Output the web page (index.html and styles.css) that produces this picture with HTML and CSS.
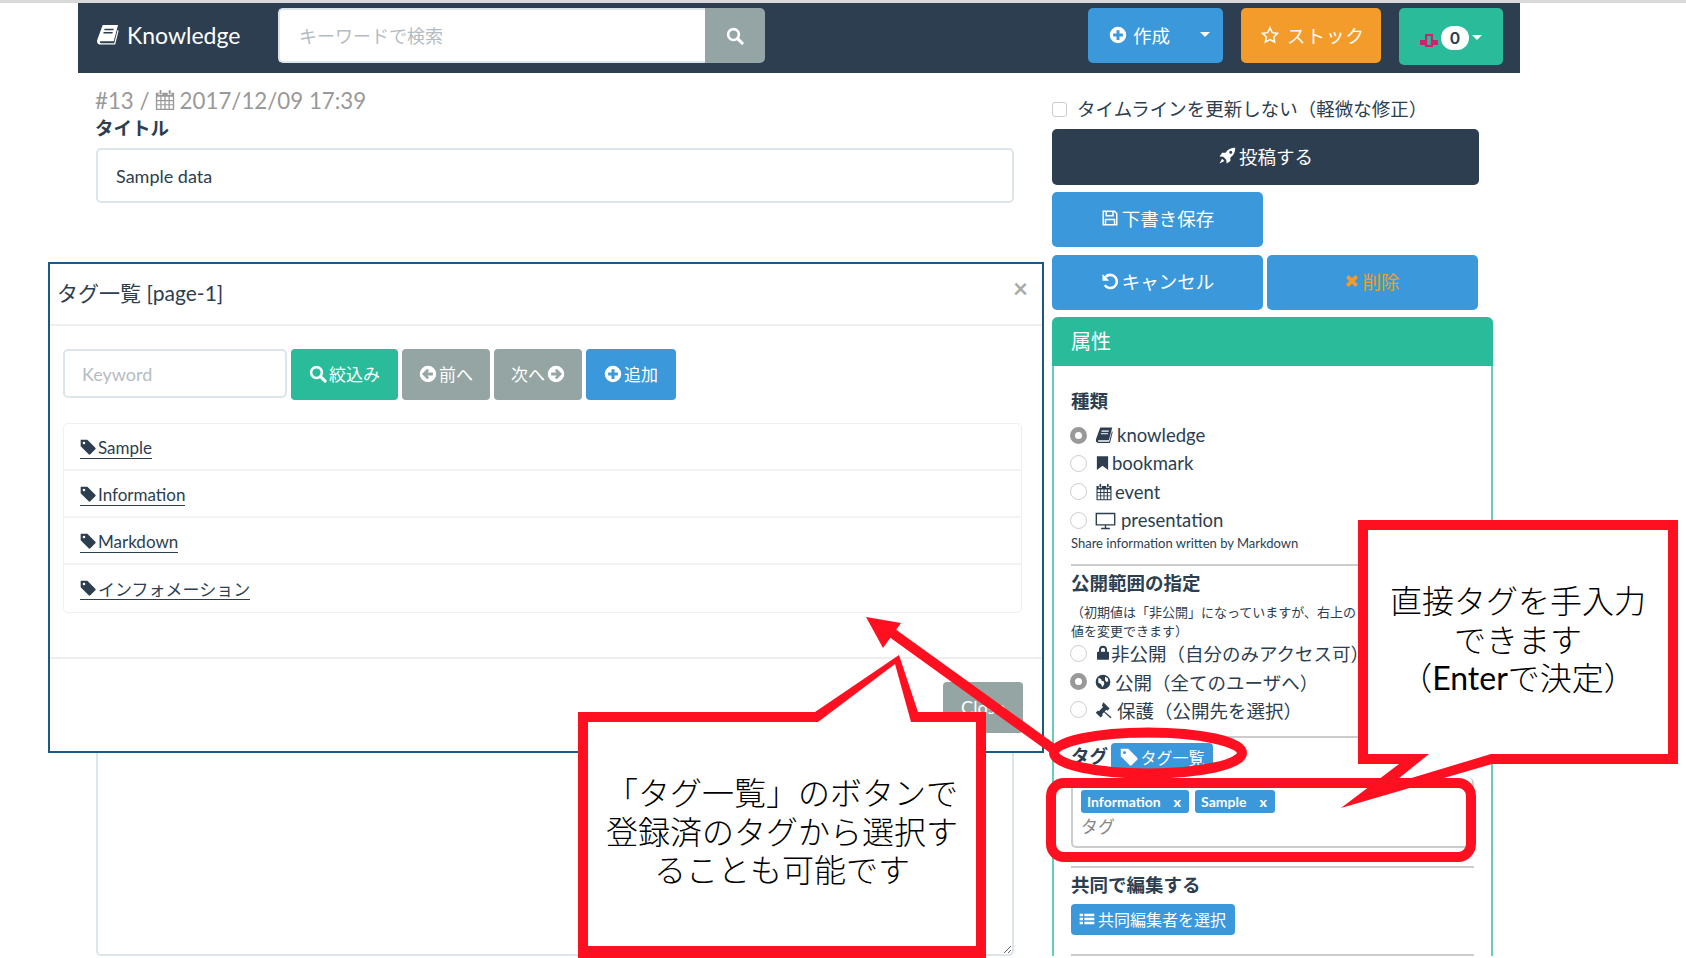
FILE: index.html
```html
<!doctype html>
<html>

<head>
	<meta charset="utf-8" />
	<link rel="stylesheet" href="styles.css">
</head>

<body>

	<svg class="icon-defs" width="0" height="0">
		<symbol id="i-book" viewBox="0 0 24 24"><path fill-rule="evenodd" d="M7 2h16l-4.500 17H5c-1.400 0-1.400 2 0 2h14l3.600-14 1 1L20 22.500H4.500C1.500 22.500 .5 20 1.500 17zM9 6l-.4 1.500h9.500L18.500 6zM8 9.500l-.4 1.500h9.500l.4-1.500z"/></symbol>
		<symbol id="i-search" viewBox="0 0 24 24"><circle cx="10" cy="10" r="7.200" fill="none" stroke="currentColor" stroke-width="3.400"/><path d="M15.500 15.500l6 6" stroke="currentColor" stroke-width="4" stroke-linecap="round"/></symbol>
		<symbol id="i-plus" viewBox="0 0 24 24"><path fill-rule="evenodd" d="M12 1a11 11 0 1 0 0 22a11 11 0 1 0 0-22zM10 5.500h4V10h4.500v4H14v4.500h-4V14H5.500v-4H10z"/></symbol>
		<symbol id="i-star" viewBox="0 0 24 24"><path fill="none" stroke="currentColor" stroke-width="2" d="M12 2.500l3 6.400 7 .9-5.100 4.800 1.300 6.900-6.200-3.400-6.200 3.400 1.300-6.900L2 9.800l7-.9z"/></symbol>
		<symbol id="i-cal" viewBox="0 0 24 24"><path fill-rule="evenodd" d="M2 4h3v2.500h4V4h6v2.500h4V4h3v19H2zM3.500 8.500V12h3.400V8.500zm4.700 0V12h3.100V8.500zm4.500 0V12h3.100V8.500zm4.500 0V12h3.300V8.500zM3.500 13.300v3.200h3.400v-3.200zm4.700 0v3.200h3.100v-3.200zm4.500 0v3.200h3.100v-3.200zm4.500 0v3.200h3.300v-3.200zM3.500 17.800v3.700h3.400v-3.700zm4.700 0v3.700h3.100v-3.700zm4.500 0v3.700h3.100v-3.700zm4.500 0v3.700h3.300v-3.700z"/><rect x="6" y="1" width="2.200" height="5" rx="1"/><rect x="16" y="1" width="2.200" height="5" rx="1"/></symbol>
		<symbol id="i-rocket" viewBox="0 0 24 24"><path fill-rule="evenodd" d="M23 1c-6 0-10 2-13 6.500H5.500L2 12.500l5 .5 4 4 .5 5 5-3.500v-4.500C21 11 23 7 23 1zM17 5a2 2 0 1 0 0 4a2 2 0 1 0 0-4zM5.500 15.500L2 22l6.500-3.500z"/></symbol>
		<symbol id="i-save" viewBox="0 0 24 24"><path fill="none" stroke="currentColor" stroke-width="2" d="M3 3h15l3 3v15H3zM7 3v6h9V3M6 21v-7h12v7"/></symbol>
		<symbol id="i-undo" viewBox="0 0 24 24"><path fill="none" stroke="currentColor" stroke-width="3.400" d="M6 6.500a8.800 8.800 0 1 1-1 11"/><path d="M2 2.500v9h9z"/></symbol>
		<symbol id="i-times" viewBox="0 0 24 24"><path stroke="currentColor" stroke-width="6.500" d="M4 4l16 16M20 4L4 20"/></symbol>
		<symbol id="i-tag" viewBox="0 0 24 24"><path fill-rule="evenodd" d="M1 1h10l12 12a2 2 0 0 1 0 2.500L15.500 23a2 2 0 0 1-2.500 0L1 11zM6 4a2 2 0 1 0 0 4a2 2 0 1 0 0-4z"/></symbol>
		<symbol id="i-left" viewBox="0 0 24 24"><path fill-rule="evenodd" d="M12 1a11 11 0 1 0 0 22a11 11 0 1 0 0-22zM11 5l2.500 2.500L11 10h7.500v4H11l2.500 2.500L11 19l-7-7z"/></symbol>
		<symbol id="i-right" viewBox="0 0 24 24"><path fill-rule="evenodd" d="M12 1a11 11 0 1 0 0 22a11 11 0 1 0 0-22zM13 5l-2.500 2.500L13 10H5.500v4H13l-2.500 2.500L13 19l7-7z"/></symbol>
		<symbol id="i-mark" viewBox="0 0 24 24"><path d="M3 1h18v22l-9-6.500L3 23z"/></symbol>
		<symbol id="i-desk" viewBox="0 0 24 24"><path fill="none" stroke="currentColor" stroke-width="1.600" d="M1.500 4h21v13h-21zM12 17v4M7 21.200h10"/></symbol>
		<symbol id="i-lock" viewBox="0 0 24 24"><path d="M4 10h16a1 1 0 0 1 1 1v10a1 1 0 0 1-1 1H4a1 1 0 0 1-1-1V11a1 1 0 0 1 1-1z"/><path fill="none" stroke="currentColor" stroke-width="3" d="M7.500 11V7a4.500 4.500 0 0 1 9 0v4"/></symbol>
		<symbol id="i-globe" viewBox="0 0 24 24"><path fill-rule="evenodd" d="M12 1a11 11 0 1 0 0 22a11 11 0 1 0 0-22zM5 6l4 1 1 3 3 1 1 4-3 5-2-5-4-2zM15 4l4 2 1 5-3 1-2-3z"/></symbol>
		<symbol id="i-gavel" viewBox="0 0 24 24"><path d="M11 1.500l8.500 8.500-3 3-1.500-1.200L13 14l9 7.500-1.500 1.500L12 15l-2.500 2.500 1 1.500-3 3L1 15.500l3-3 1.200 1.300 5.800-6.300L9 6.500z"/></symbol>
		<symbol id="i-list" viewBox="0 0 24 24"><path d="M1 4h5v4H1zM8 4h15v4H8zM1 10h5v4H1zM8 10h15v4H8zM1 16h5v4H1zM8 16h15v4H8z"/></symbol>
	</svg>

	<div class="topline"></div>

	<nav class="navbar">
		<a class="brand"><svg class="ico ico-brand"><use href="#i-book"/></svg>Knowledge</a>
		<div class="search">
			<input class="search-input" placeholder="キーワードで検索">
			<span class="search-btn"><svg class="ico"><use href="#i-search"/></svg></span>
		</div>
		<div class="nav-actions">
			<a class="nav-btn nav-create"><svg class="ico"><use href="#i-plus"/></svg>作成<i class="caret caret-create"></i></a>
			<a class="nav-btn nav-stock"><svg class="ico"><use href="#i-star"/></svg>ストック</a>
			<a class="nav-btn nav-user">
				<svg class="pink" viewBox="0 0 18 15"><path fill-rule="evenodd" d="M5 1h8v6h5v5h-5v2H5v-2H0V7h5zM7.200 3v9h3.600V3z"/></svg>
				<span class="badge">0</span><i class="caret"></i>
			</a>
		</div>
	</nav>

	<main class="page">
		<section class="editor">
			<div class="meta">#13 / <svg class="ico ico-meta"><use href="#i-cal"/></svg> 2017/12/09 17:39</div>
			<label class="title-label">タイトル</label>
			<input class="title-input" value="Sample data">
			<textarea class="body-input"></textarea>
		</section>

		<aside class="side">
			<label class="check-row"><input type="checkbox" class="check">タイムラインを更新しない（軽微な修正）</label>
			<a class="btn btn-post"><svg class="ico"><use href="#i-rocket"/></svg>投稿する</a>
			<div class="btn-row">
				<a class="btn btn-blue"><svg class="ico"><use href="#i-save"/></svg>下書き保存</a>
			</div>
			<div class="btn-row">
				<a class="btn btn-blue"><svg class="ico"><use href="#i-undo"/></svg>キャンセル</a>
				<a class="btn btn-blue btn-danger"><svg class="ico"><use href="#i-times"/></svg>削除</a>
			</div>

			<div class="panel">
				<div class="panel-head">属性</div>
				<div class="panel-body">
					<h5 class="kind-title">種類</h5>
					<label class="radio-row"><input type="radio" name="kind" checked><svg class="ico"><use href="#i-book"/></svg>knowledge</label>
					<label class="radio-row"><input type="radio" name="kind"><svg class="ico ico-mark"><use href="#i-mark"/></svg>bookmark</label>
					<label class="radio-row"><input type="radio" name="kind"><svg class="ico ico-cal"><use href="#i-cal"/></svg>event</label>
					<label class="radio-row"><input type="radio" name="kind"><svg class="ico ico-wide"><use href="#i-desk"/></svg>presentation</label>
					<p class="help">Share information written by Markdown</p>
					<hr class="rule rule-first">

					<h5 class="scope-title">公開範囲の指定</h5>
					<p class="note">（初期値は「非公開」になっていますが、右上の<br>値を変更できます）</p>
					<label class="radio-row"><input type="radio" name="scope"><svg class="ico ico-lock"><use href="#i-lock"/></svg>非公開（自分のみアクセス可）</label>
					<label class="radio-row"><input type="radio" name="scope" checked><svg class="ico ico-globe"><use href="#i-globe"/></svg>公開（全てのユーザへ）</label>
					<label class="radio-row"><input type="radio" name="scope"><svg class="ico"><use href="#i-gavel"/></svg>保護（公開先を選択）</label>
					<hr class="rule rule-tags">

					<div class="tag-head">
						<h5>タグ</h5>
						<a class="tag-list-btn"><svg class="ico"><use href="#i-tag"/></svg>タグ一覧</a>
					</div>
					<div class="tag-input">
						<div class="chips">
							<span class="chip">Information<b>x</b></span>
							<span class="chip">Sample<b>x</b></span>
						</div>
						<span class="tag-placeholder">タグ</span>
					</div>
					<hr class="rule rule-edit">

					<h5 class="edit-title">共同で編集する</h5>
					<a class="editor-btn"><svg class="ico"><use href="#i-list"/></svg>共同編集者を選択</a>
					<hr class="rule rule-last">
				</div>
			</div>
		</aside>
	</main>

	<div class="modal">
		<div class="modal-head">
			<span>タグ一覧 [page-1]</span>
			<span class="modal-x">×</span>
		</div>
		<div class="modal-body">
			<div class="filter">
				<input class="keyword" placeholder="Keyword">
				<a class="mbtn mbtn-green"><svg class="ico"><use href="#i-search"/></svg>絞込み</a>
				<a class="mbtn mbtn-gray mbtn-prev"><svg class="ico"><use href="#i-left"/></svg>前へ</a>
				<a class="mbtn mbtn-gray mbtn-next">次へ<svg class="ico"><use href="#i-right"/></svg></a>
				<a class="mbtn mbtn-blue"><svg class="ico"><use href="#i-plus"/></svg>追加</a>
			</div>
			<ul class="tag-list">
				<li><a><svg class="ico"><use href="#i-tag"/></svg>Sample</a></li>
				<li><a><svg class="ico"><use href="#i-tag"/></svg>Information</a></li>
				<li><a><svg class="ico"><use href="#i-tag"/></svg>Markdown</a></li>
				<li><a><svg class="ico"><use href="#i-tag"/></svg>インフォメーション</a></li>
			</ul>
		</div>
		<div class="modal-foot"><a class="close-btn">Close</a></div>
	</div>

	<!-- red annotations drawn over the screenshot -->
	<svg class="marks" viewBox="0 0 1686 958">
		<polygon class="red" points="578,712 815,712 899,655 918,712 986,712 986,958 578,958"/>
		<polygon class="white" points="588,722 818,722 895,664 911,722 976,722 976,946 588,946"/>

		<path class="red-line" d="M1056 751L888 630"/>
		<polygon class="red" points="866,617 901,623 883,648"/>

		<ellipse class="red-ring" cx="1148" cy="753" rx="94" ry="20.500"/>
		<rect class="red-ring" x="1051" y="783" width="420" height="74" rx="13"/>

		<polygon class="red" points="1358,520 1678,520 1678,764 1492,764 1341,808 1399,764 1358,764"/>
		<polygon class="white" points="1368,530 1668,530 1668,754 1491,754 1408,779 1398,779 1429,754 1368,754"/>
		<path class="red-line" d="M1380 783h60"/>
	</svg>

	<div class="callout callout-left">「タグ一覧」のボタンで<br>登録済のタグから選択す<br>ることも可能です</div>
	<div class="callout callout-right">直接タグを手入力<br>できます<br>（<span class="latin">Enter</span>で決定）</div>

</body>

</html>
```

FILE: styles.css
```css
* {
	box-sizing: border-box;
}

html,
body {
	height: 100vh;
	margin: 0;
	overflow: hidden;
}

body {
	position: relative;
	background: #fff;
	color: #2c3e50;
	font-family: Lato, "Noto Sans CJK JP", sans-serif;
	font-size: 18.500px;
}

input,
textarea {
	font-family: inherit;
	outline: none;
}

.icon-defs {
	position: absolute;
}

.ico {
	width: 18px;
	height: 18px;
	flex: none;
	fill: currentColor;
}

.topline {
	height: 3px;
	background: #d9d9d9;
}

/* navbar */
.navbar {
	display: flex;
	align-items: flex-start;
	width: 1442px;
	height: 70px;
	margin-left: 78px;
	padding: 5px 17px 0 18px;
	background: #2c3e50;
	color: #fff;
}

.brand {
	display: flex;
	align-items: center;
	gap: 8px;
	width: 182px;
	height: 53px;
	font-size: 23px;
}

.ico-brand {
	width: 23px;
	height: 23px;
}

.search {
	display: flex;
	width: 487px;
	height: 55px;
}

.search-input {
	flex: 1;
	min-width: 0;
	padding: 0 19px;
	border: 2px solid #dce4ec;
	border-right: 0;
	border-radius: 5px 0 0 5px;
	font-size: 18px;
}

.search-input::placeholder,
.keyword::placeholder {
	color: #b4bcc2;
}

.search-btn {
	display: flex;
	align-items: center;
	justify-content: center;
	width: 60px;
	border-radius: 0 5px 5px 0;
	background: #95a5a6;
}

.nav-actions {
	display: flex;
	gap: 18px;
	margin-left: auto;
}

.nav-btn {
	display: flex;
	align-items: center;
	height: 55px;
	padding-bottom: 2px;
	border-radius: 5px;
}

.nav-create {
	width: 135px;
	padding-left: 21px;
	gap: 6px;
	background: #3a98db;
}

.nav-stock {
	width: 140px;
	padding-left: 20px;
	gap: 8px;
	background: #f39c2c;
	letter-spacing: 1px;
}

.nav-user {
	width: 104px;
	height: 57px;
	padding: 2px 0 0 21px;
	background: #2abb9b;
}

.caret {
	width: 0;
	height: 0;
	margin-left: 3px;
	border: 5px solid transparent;
	border-top-color: #fff;
	border-bottom: 0;
}

.caret-create {
	margin-left: 24px;
}

.pink {
	width: 18px;
	height: 15px;
	margin-top: 6px;
	fill: #c9256e;
}

.badge {
	width: 28px;
	height: 24px;
	margin-left: 3px;
	border-radius: 12px;
	background: #fff;
	color: #2c3e50;
	font-size: 17px;
	font-weight: 700;
	line-height: 24px;
	text-align: center;
}

/* page columns */
.page {
	display: flex;
	gap: 38px;
	padding-left: 95px;
}

.editor {
	display: flex;
	flex-direction: column;
	width: 919px;
}

.meta {
	display: flex;
	align-items: center;
	gap: 4px;
	height: 30px;
	margin-top: 12px;
	color: #999;
	font-size: 22.300px;
}

.ico-meta {
	width: 22px;
	height: 24px;
}

.title-label {
	height: 26px;
	font-weight: 700;
	line-height: 26px;
}

.title-input {
	height: 55px;
	margin: 7px 0 0 1px;
	padding: 0 18px;
	border: 2px solid #dce4ec;
	border-radius: 5px;
	color: #2c3e50;
	font-size: 18px;
}

.body-input {
	height: 686px;
	margin: 67px 0 0 1px;
	border: 2px solid #dce4ec;
	border-radius: 5px;
}

/* right column */
.side {
	width: 441px;
}

.check-row {
	display: flex;
	align-items: center;
	height: 22px;
	margin-top: 25px;
	padding-bottom: 2px;
	white-space: nowrap;
}

.check {
	width: 15px;
	height: 15px;
	margin: 2px 10px 0 0;
	appearance: none;
	border: 1px solid #ccc;
	border-radius: 3px;
}

.btn {
	display: flex;
	align-items: center;
	justify-content: center;
	gap: 3px;
	height: 55px;
	padding-bottom: 3px;
	border-radius: 5px;
	color: #fff;
}

.btn-post {
	width: 427px;
	height: 56px;
	margin: 9px 0 7px;
	background: #2c3e50;
}

.btn-row {
	display: flex;
	gap: 4px;
	margin-bottom: 8px;
}

.btn-blue {
	width: 211px;
	background: #3a98db;
}

.btn-danger {
	color: #f39c2c;
}

.btn-danger .ico {
	width: 14px;
	height: 14px;
}

.panel {
	width: 441px;
	margin-top: -1px;
	border: 2px solid #66cdb7;
	border-top: 0;
	border-bottom: 0;
	border-radius: 6px 6px 0 0;
}

.panel-head {
	height: 49px;
	margin: 0 -2px;
	padding-left: 19px;
	border-radius: 6px 6px 0 0;
	background: #2abb9b;
	color: #fff;
	font-size: 20px;
	line-height: 49px;
}

.panel-body {
	padding: 23px 17px 0;
}

h5 {
	height: 24px;
	margin: 0;
	font-size: 18.500px;
	font-weight: 700;
	line-height: 24px;
}

.radio-row {
	display: flex;
	align-items: center;
	height: 28.300px;
	gap: 4px;
	white-space: nowrap;
}

.radio-row input {
	width: 17px;
	height: 17px;
	margin: 0 4px 0 -1px;
	appearance: none;
	border: 1px solid #ccc;
	border-radius: 50%;
}

.radio-row input:checked {
	border: 5px solid #999;
	background: #fff;
}

.kind-title {
	margin-bottom: 8px;
}

.ico-mark {
	width: 15px;
	margin-right: -2px;
}

.ico-cal {
	margin-right: -2px;
}

.ico-wide {
	width: 21px;
	height: 21px;
	margin-right: 1px;
}

.ico-lock {
	width: 16px;
	height: 16px;
	margin-right: -4px;
}

.ico-globe {
	width: 16px;
	height: 16px;
}

.help {
	height: 16px;
	margin: 1px 0 0;
	font-size: 13px;
	line-height: 16px;
	white-space: nowrap;
}

.rule {
	height: 2px;
	margin: 0;
	border: 0;
	background: #ccc;
}

.rule-first {
	margin-top: 13px;
}

.scope-title {
	margin-top: 5px;
}

.note {
	height: 36px;
	margin: 8px 0 0;
	font-size: 13px;
	line-height: 19px;
	white-space: nowrap;
}

.rule-tags {
	margin-top: 12px;
}

.tag-head {
	display: flex;
	height: 28px;
	margin-top: 5px;
	gap: 3px;
}

.tag-head h5 {
	margin-top: 1px;
}

.tag-list-btn {
	display: flex;
	align-items: center;
	justify-content: center;
	width: 102px;
	gap: 3px;
	border-radius: 4px 4px 0 0;
	background: #3a98db;
	color: #fff;
	font-size: 16px;
}

.tag-input {
	display: flex;
	flex-direction: column;
	height: 70px;
	margin-top: 7px;
	padding: 12px 0 0 8px;
	border: 2px solid #ccc;
	border-top: 0;
	border-radius: 5px;
}

.chips {
	display: flex;
	gap: 6px;
}

.chip {
	display: flex;
	justify-content: space-between;
	height: 23px;
	padding: 0 8px 0 6px;
	border-radius: 3px;
	background: #3a98db;
	color: #fff;
	font-size: 14px;
	font-weight: 700;
	line-height: 23px;
}

.chip b {
	margin-left: 13px;
}

.tag-placeholder {
	margin-top: 2px;
	color: #888;
	font-size: 17px;
	line-height: 24px;
}

.rule-edit {
	margin-top: 18px;
}

.edit-title {
	margin-top: 5px;
}

.editor-btn {
	display: flex;
	align-items: center;
	width: 164px;
	height: 31px;
	margin-top: 7px;
	padding: 0 0 2px 8px;
	gap: 3px;
	border-radius: 4px;
	background: #3a98db;
	color: #fff;
	font-size: 16px;
	white-space: nowrap;
}

.editor-btn .ico {
	width: 16px;
	height: 16px;
}

.rule-last {
	margin-top: 19px;
}

/* tag list dialog */
.modal {
	display: flex;
	flex-direction: column;
	position: absolute;
	top: 262px;
	left: 48px;
	width: 996px;
	height: 491px;
	border: 2px solid #1c5a86;
	background: #fff;
}

.modal-head {
	display: flex;
	align-items: center;
	justify-content: space-between;
	height: 62px;
	padding: 0 14px 4px 7px;
	border-bottom: 2px solid #eee;
	font-size: 21px;
}

.modal-x {
	margin-top: -8px;
	color: #aaa;
	font-size: 26px;
	font-weight: 700;
}

.modal-body {
	height: 331px;
	padding: 23px 20px 0 13px;
}

.filter {
	display: flex;
	gap: 4px;
	height: 51px;
}

.keyword {
	width: 224px;
	height: 49px;
	padding: 0 17px;
	border: 2px solid #dce4ec;
	border-radius: 5px;
	font-size: 18px;
}

.mbtn {
	display: flex;
	align-items: center;
	justify-content: center;
	gap: 2px;
	padding-bottom: 2px;
	border-radius: 4px;
	color: #fff;
	font-size: 17px;
}

.mbtn-green {
	width: 107px;
	background: #2abb9b;
}

.mbtn-gray {
	background: #95a5a3;
}

.mbtn-prev {
	width: 88px;
}

.mbtn-next {
	width: 88px;
}

.mbtn-blue {
	width: 90px;
	background: #3a98db;
}

.tag-list {
	margin: 23px 0 0;
	padding: 0;
	border: 1px solid #f0f0f0;
	border-radius: 5px;
	list-style: none;
}

.tag-list li {
	height: 47px;
	padding: 12px 0 0 16px;
	border-bottom: 2px solid #f3f3f3;
}

.tag-list li:last-child {
	border-bottom: 0;
}

.tag-list a {
	display: inline-flex;
	align-items: center;
	gap: 2px;
	height: 23px;
	border-bottom: 1px solid #2c3e50;
	font-size: 17px;
}

.tag-list .ico {
	width: 16px;
	height: 16px;
}

.modal-foot {
	display: flex;
	justify-content: flex-end;
	flex: 1;
	padding: 23px 19px 0 0;
	border-top: 2px solid #eee;
}

.close-btn {
	width: 80px;
	height: 51px;
	border-radius: 4px;
	background: #95a5a3;
	color: #fff;
	font-size: 18px;
	line-height: 51px;
	text-align: center;
}

/* annotations */
.marks {
	position: absolute;
	top: 0;
	left: 0;
	width: 1686px;
	height: 958px;
}

.red {
	fill: #ff1020;
}

.white {
	fill: #fff;
}

.red-line {
	fill: none;
	stroke: #ff1020;
	stroke-width: 10;
}

.red-ring {
	fill: none;
	stroke: #ff1020;
	stroke-width: 10;
}

.callout {
	position: absolute;
	color: #000;
	font-size: 32px;
	font-weight: 300;
	line-height: 38.500px;
	text-align: center;
	white-space: nowrap;
}

.latin {
	font-weight: 400;
}

.callout-left {
	top: 774px;
	left: 588px;
	width: 388px;
}

.callout-right {
	top: 582px;
	left: 1368px;
	width: 300px;
}
```
